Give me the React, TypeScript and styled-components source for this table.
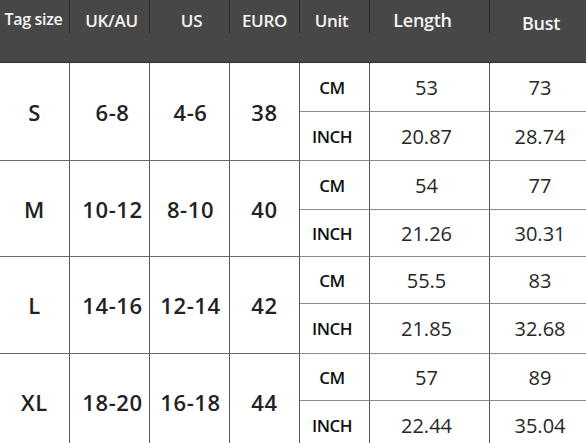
import React from "react";
import styled, { createGlobalStyle } from "styled-components";

const Global = createGlobalStyle`
  html, body { margin: 0; padding: 0; background: #ffffff; }
  body { font-family: "Open Sans", "Liberation Sans", sans-serif; overflow: hidden; }
`;

const COLS = "70px 80px 80px 70px 70px 120px 96px";

const Page = styled.div`
  width: 586px;
  height: 443px;
  overflow: hidden;
  background: #ffffff;
`;

const HeaderRow = styled.div`
  display: grid;
  grid-template-columns: ${COLS};
  height: 63px;
  background: #474747;
  border-bottom: 1px solid #303030;
  box-sizing: border-box;
`;

const HeadCell = styled.div`
  display: flex;
  flex-direction: column;
`;

const HeadLabel = styled.div<{ $last?: boolean; $top: number }>`
  height: 33px;
  box-sizing: border-box;
  border-right: ${(p) => (p.$last ? "none" : "1px solid #262626")};
  display: flex;
  justify-content: center;
  align-items: flex-start;
  padding-top: ${(p) => p.$top}px;
`;

const HeadText = styled.span<{ $size: number; $shift: number }>`
  color: #f4f4f4;
  font-weight: 600;
  font-size: ${(p) => p.$size}px;
  letter-spacing: -0.3px;
  line-height: 1;
  white-space: nowrap;
  transform: translateX(${(p) => p.$shift}px);
`;

const Body = styled.div`
  display: grid;
  grid-template-columns: ${COLS};
  grid-template-rows: 49px 49px 49px 47px 47px 50px 47px 50px;
`;

const Cell = styled.div<{ $last?: boolean }>`
  box-sizing: border-box;
  border-right: ${(p) => (p.$last ? "none" : "1px solid #5a5a5a")};
  border-bottom: 1px solid #8c8c8c;
  display: flex;
  align-items: center;
  justify-content: center;
  color: #1e1e1e;
  white-space: nowrap;
`;

const SizeCell = styled(Cell)<{ $shift: number }>`
  grid-row: span 2;
  font-size: 22px;
  font-weight: 600;
  letter-spacing: 0.6px;
  color: #222;
  padding-left: ${(p) => Math.max(0, p.$shift) * 2}px;
  border-bottom-color: #6a6a6a;
`;

const UnitCell = styled(Cell)`
  font-size: 17px;
  font-weight: 600;
  letter-spacing: -0.5px;
  padding-right: 5px;
  color: #111;
`;

const ValueCell = styled(Cell)<{ $shift: number }>`
  font-size: 20px;
  font-weight: 400;
  color: #262626;
  padding-left: ${(p) => (p.$shift > 0 ? p.$shift * 2 : 0)}px;
  padding-right: ${(p) => (p.$shift < 0 ? -p.$shift * 2 : 0)}px;
`;

const headers = [
  { t: "Tag size", size: 16, shift: -1, top: 11 },
  { t: "UK/AU", size: 17, shift: 2, top: 12 },
  { t: "US", size: 17, shift: 2, top: 12 },
  { t: "EURO", size: 17, shift: 0, top: 12 },
  { t: "Unit", size: 17, shift: -3, top: 12 },
  { t: "Length", size: 18, shift: -7, top: 11 },
  { t: "Bust", size: 18, shift: 3, top: 14 },
];

const rows = [
  { tag: "S", uk: "6-8", us: "4-6", eu: "38", cm: ["53", "73"], inch: ["20.87", "28.74"] },
  { tag: "M", uk: "10-12", us: "8-10", eu: "40", cm: ["54", "77"], inch: ["21.26", "30.31"] },
  { tag: "L", uk: "14-16", us: "12-14", eu: "42", cm: ["55.5", "83"], inch: ["21.85", "32.68"] },
  { tag: "XL", uk: "18-20", us: "16-18", eu: "44", cm: ["57", "89"], inch: ["22.44", "35.04"] },
];

export default function App() {
  return (
    <Page>
      <Global />
      <HeaderRow>
        {headers.map((h, i) => (
          <HeadCell key={h.t}>
            <HeadLabel $last={i === headers.length - 1} $top={h.top}>
              <HeadText $size={h.size} $shift={h.shift}>{h.t}</HeadText>
            </HeadLabel>
          </HeadCell>
        ))}
      </HeaderRow>
      <Body>
        {rows.map((r) => (
          <React.Fragment key={r.tag}>
            <SizeCell $shift={0}>{r.tag}</SizeCell>
            <SizeCell $shift={3}>{r.uk}</SizeCell>
            <SizeCell $shift={1}>{r.us}</SizeCell>
            <SizeCell $shift={0}>{r.eu}</SizeCell>
            <UnitCell>CM</UnitCell>
            <ValueCell $shift={-3}>{r.cm[0]}</ValueCell>
            <ValueCell $last $shift={2}>{r.cm[1]}</ValueCell>
            <UnitCell>INCH</UnitCell>
            <ValueCell $shift={-3}>{r.inch[0]}</ValueCell>
            <ValueCell $last $shift={2}>{r.inch[1]}</ValueCell>
          </React.Fragment>
        ))}
      </Body>
    </Page>
  );
}
